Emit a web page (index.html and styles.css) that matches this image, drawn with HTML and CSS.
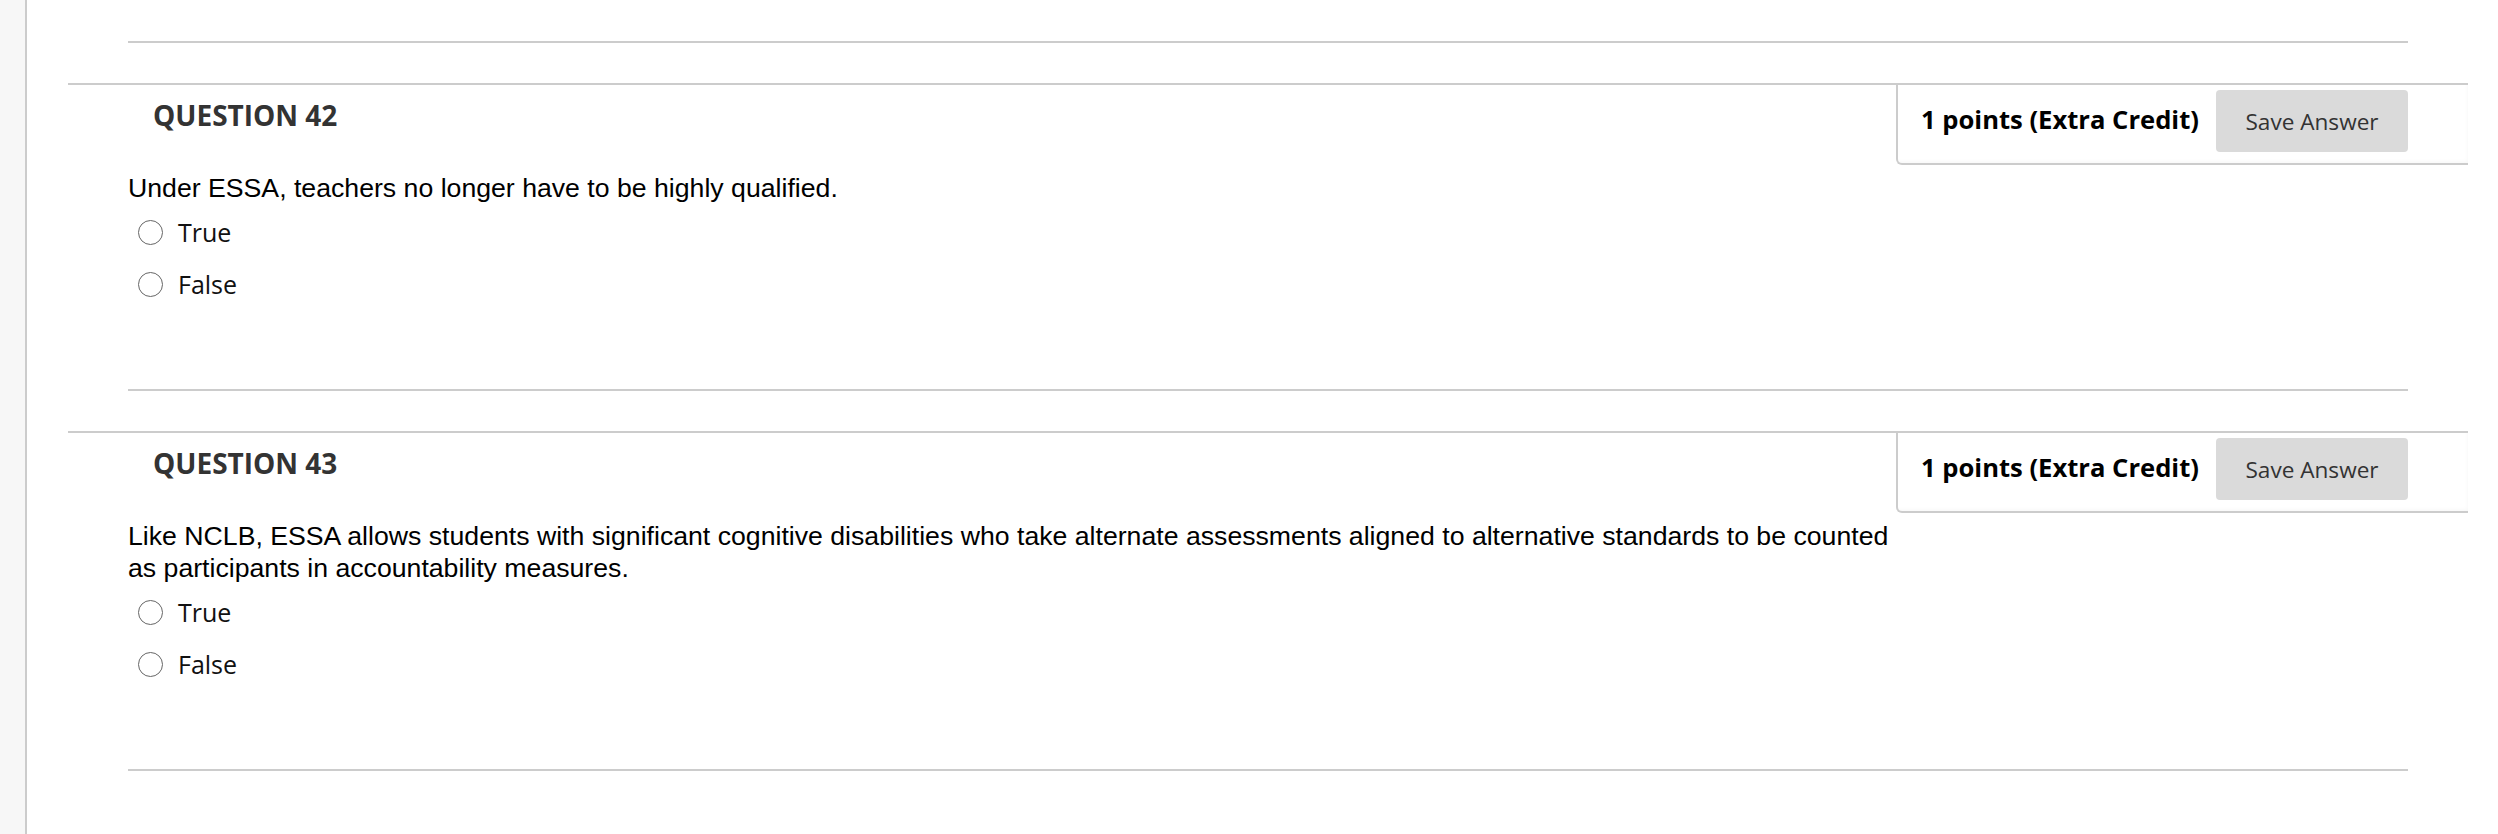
FILE: index.html
```html
<!DOCTYPE html>
<html lang="en">
<head>
<meta charset="utf-8">
<title>Test</title>
<link rel="stylesheet" href="styles.css">
</head>
<body>
<div class="page">
  <aside class="sidebar"></aside>
  <main class="main">
    <div class="prev-end"></div>

    <section class="question">
      <div class="q-head">
        <h3 class="q-title">QUESTION 42</h3>
        <div class="points-box">
          <span class="points">1 points (Extra Credit)</span>
          <button class="save-btn" type="button">Save Answer</button>
        </div>
      </div>
      <div class="q-body">
        <div class="q-text">Under ESSA, teachers no longer have to be highly qualified.</div>
        <ul class="choices">
          <li class="choice"><input type="radio" name="q42" class="radio" id="q42t"><label for="q42t">True</label></li>
          <li class="choice"><input type="radio" name="q42" class="radio" id="q42f"><label for="q42f">False</label></li>
        </ul>
        <div class="q-sep"></div>
      </div>
    </section>

    <section class="question">
      <div class="q-head">
        <h3 class="q-title">QUESTION 43</h3>
        <div class="points-box">
          <span class="points">1 points (Extra Credit)</span>
          <button class="save-btn" type="button">Save Answer</button>
        </div>
      </div>
      <div class="q-body">
        <div class="q-text">Like NCLB, ESSA allows students with significant cognitive disabilities who take alternate assessments aligned to alternative standards to be counted as participants in accountability measures.</div>
        <ul class="choices">
          <li class="choice"><input type="radio" name="q43" class="radio" id="q43t"><label for="q43t">True</label></li>
          <li class="choice"><input type="radio" name="q43" class="radio" id="q43f"><label for="q43f">False</label></li>
        </ul>
        <div class="q-sep"></div>
      </div>
    </section>
  </main>
</div>
</body>
</html>
```
FILE: styles.css
```css
* { box-sizing: border-box; }
html, body {
  margin: 0;
  padding: 0;
  background: #fff;
  height: 100%;
}
.page {
  display: flex;
  min-height: 100vh;
}
.sidebar {
  width: 27px;
  flex: none;
  background: #f7f7f7;
  border-right: 2px solid #cccccc;
}
.main {
  flex: 1;
  padding-top: 41px;
}
.prev-end {
  margin: 0 90px 0 101px;
  border-top: 2px solid #cccccc;
}
.question {
  margin: 40px 30px 0 41px;
  border-top: 2px solid #cccccc;
}
.q-head {
  display: flex;
  justify-content: space-between;
  align-items: flex-start;
}
.q-title {
  margin: 12px 0 0 85px;
  font-family: "Open Sans", sans-serif;
  font-weight: 700;
  font-size: 28px;
  line-height: 36px;
  color: #333333;
}
.points-box {
  display: flex;
  align-items: center;
  width: 572px;
  padding: 5px 60px 11px 23px;
  border-left: 2px solid #cccccc;
  border-bottom: 2px solid #cccccc;
  border-bottom-left-radius: 6px;
  box-shadow: inset -3px -4px 4px -3px rgba(0, 0, 0, 0.04);
}
.points {
  font-family: "Open Sans", sans-serif;
  font-weight: 700;
  font-size: 25.6px;
  line-height: 30px;
  margin-top: -3px;
  color: #000;
  white-space: nowrap;
}
.save-btn {
  margin-left: auto;
  width: 192px;
  height: 62px;
  border: none;
  border-radius: 4px;
  background: #dadada;
  color: #333333;
  font-family: "Open Sans", sans-serif;
  font-size: 22.6px;
  padding: 0;
}
.q-body {
  margin-top: 7px;
  padding: 0 60px 0 60px;
}
.q-text {
  font-family: "Liberation Sans", Arial, sans-serif;
  font-size: 26.67px;
  line-height: 32px;
  color: #000;
  max-width: 1765px;
}
.choices {
  list-style: none;
  margin: 2px 0 0 0;
  padding: 0 0 0 10px;
}
.choice {
  display: flex;
  align-items: center;
  height: 52px;
}
.radio {
  appearance: none;
  -webkit-appearance: none;
  margin: 0 15px 0 0;
  width: 25px;
  height: 25px;
  border: 1.8px solid #666666;
  border-radius: 50%;
  background: #fff;
  flex: none;
}
.choice label {
  font-family: "Open Sans", sans-serif;
  font-size: 25px;
  color: #111;
}
.q-sep {
  margin-top: 79px;
  border-top: 2px solid #cccccc;
}
```
